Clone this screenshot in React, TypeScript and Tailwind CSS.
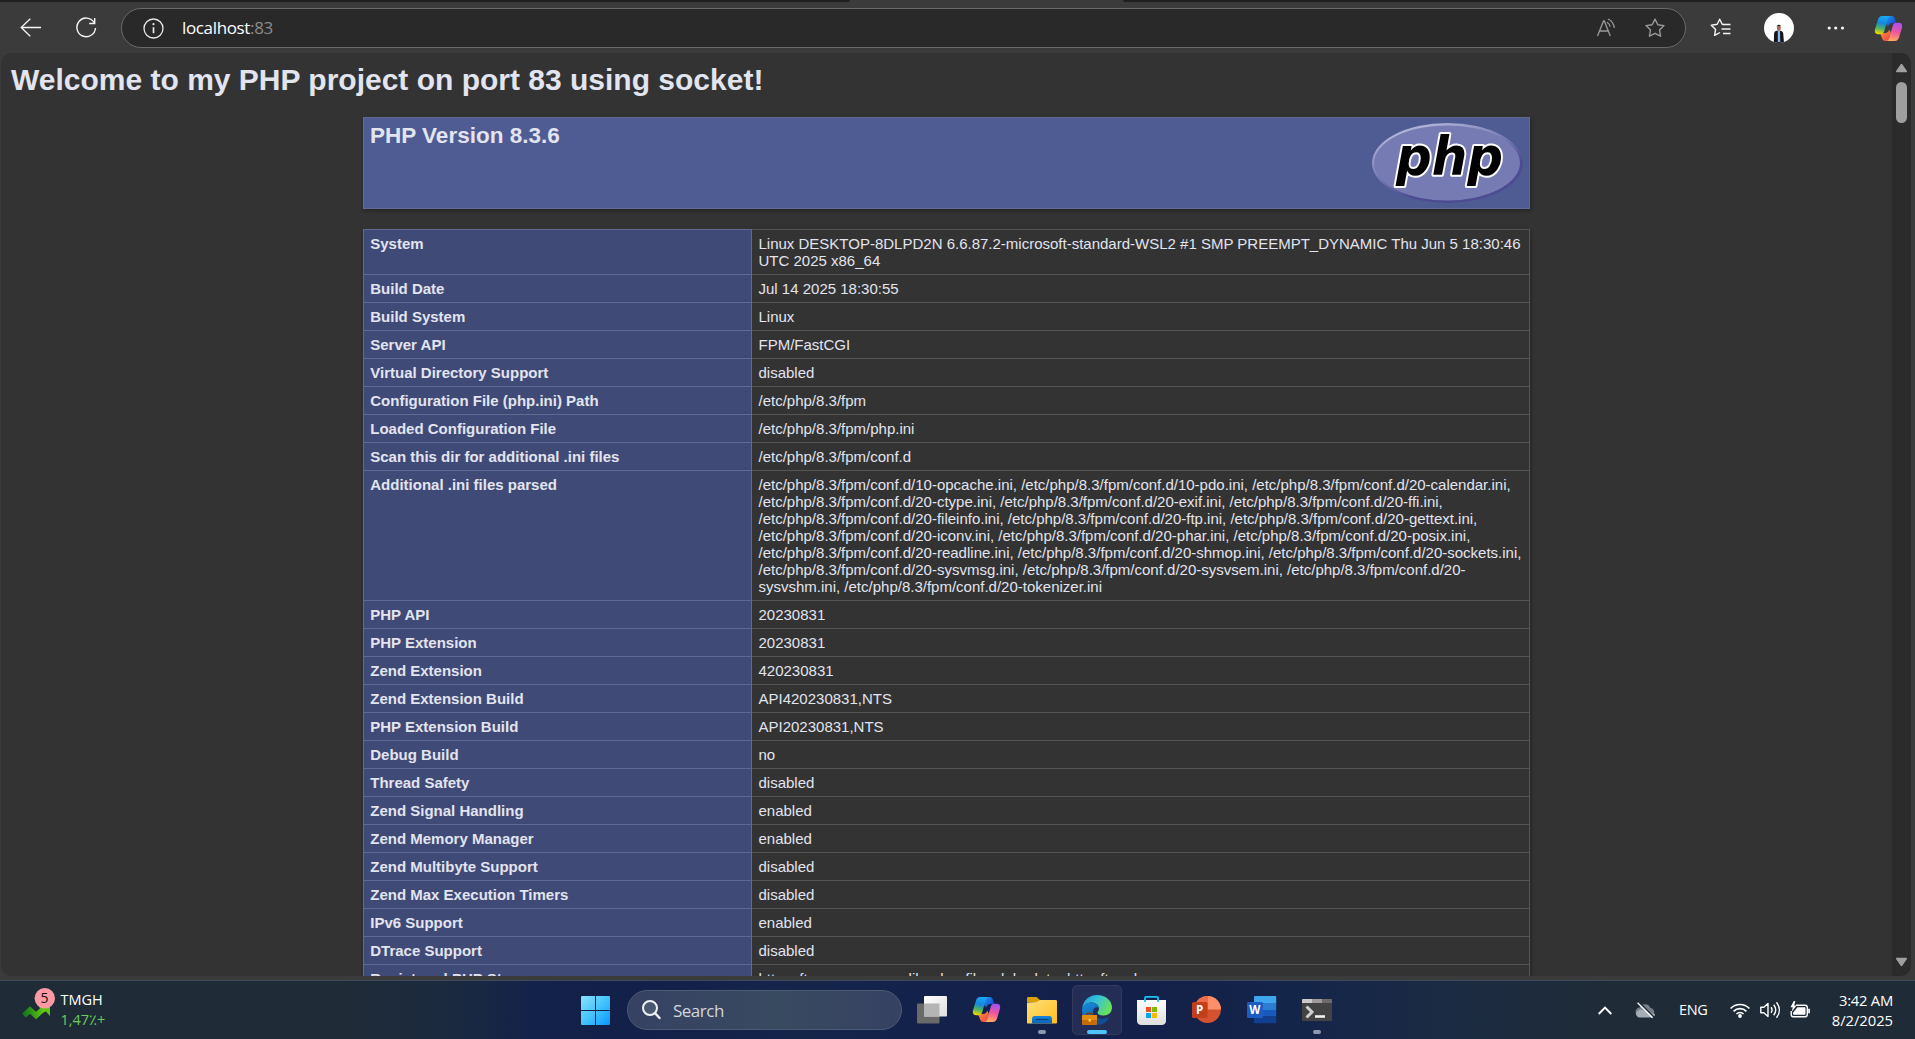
import React from "react";

const rows: { label: string; value: string[] }[] = [
  {
    label: "System",
    value: [
      "Linux DESKTOP-8DLPD2N 6.6.87.2-microsoft-standard-WSL2 #1 SMP PREEMPT_DYNAMIC Thu Jun 5 18:30:46",
      "UTC 2025 x86_64",
    ],
  },
  { label: "Build Date", value: ["Jul 14 2025 18:30:55"] },
  { label: "Build System", value: ["Linux"] },
  { label: "Server API", value: ["FPM/FastCGI"] },
  { label: "Virtual Directory Support", value: ["disabled"] },
  { label: "Configuration File (php.ini) Path", value: ["/etc/php/8.3/fpm"] },
  { label: "Loaded Configuration File", value: ["/etc/php/8.3/fpm/php.ini"] },
  { label: "Scan this dir for additional .ini files", value: ["/etc/php/8.3/fpm/conf.d"] },
  {
    label: "Additional .ini files parsed",
    value: [
      "/etc/php/8.3/fpm/conf.d/10-opcache.ini, /etc/php/8.3/fpm/conf.d/10-pdo.ini, /etc/php/8.3/fpm/conf.d/20-calendar.ini,",
      "/etc/php/8.3/fpm/conf.d/20-ctype.ini, /etc/php/8.3/fpm/conf.d/20-exif.ini, /etc/php/8.3/fpm/conf.d/20-ffi.ini,",
      "/etc/php/8.3/fpm/conf.d/20-fileinfo.ini, /etc/php/8.3/fpm/conf.d/20-ftp.ini, /etc/php/8.3/fpm/conf.d/20-gettext.ini,",
      "/etc/php/8.3/fpm/conf.d/20-iconv.ini, /etc/php/8.3/fpm/conf.d/20-phar.ini, /etc/php/8.3/fpm/conf.d/20-posix.ini,",
      "/etc/php/8.3/fpm/conf.d/20-readline.ini, /etc/php/8.3/fpm/conf.d/20-shmop.ini, /etc/php/8.3/fpm/conf.d/20-sockets.ini,",
      "/etc/php/8.3/fpm/conf.d/20-sysvmsg.ini, /etc/php/8.3/fpm/conf.d/20-sysvsem.ini, /etc/php/8.3/fpm/conf.d/20-",
      "sysvshm.ini, /etc/php/8.3/fpm/conf.d/20-tokenizer.ini",
    ],
  },
  { label: "PHP API", value: ["20230831"] },
  { label: "PHP Extension", value: ["20230831"] },
  { label: "Zend Extension", value: ["420230831"] },
  { label: "Zend Extension Build", value: ["API420230831,NTS"] },
  { label: "PHP Extension Build", value: ["API20230831,NTS"] },
  { label: "Debug Build", value: ["no"] },
  { label: "Thread Safety", value: ["disabled"] },
  { label: "Zend Signal Handling", value: ["enabled"] },
  { label: "Zend Memory Manager", value: ["enabled"] },
  { label: "Zend Multibyte Support", value: ["disabled"] },
  { label: "Zend Max Execution Timers", value: ["disabled"] },
  { label: "IPv6 Support", value: ["enabled"] },
  { label: "DTrace Support", value: ["disabled"] },
  {
    label: "Registered PHP Streams",
    value: ["https, ftps, compress.zlib, php, file, glob, data, http, ftp, phar"],
  },
];

const UI = "font-['Open_Sans','Noto_Sans',sans-serif]";

function CopilotIcon({ id }: { id: string }) {
  return (
    <svg width="29" height="27" viewBox="0 0 29 27">
      <defs>
        <linearGradient id={id + "a"} x1="0.5" y1="0" x2="0.3" y2="1">
          <stop offset="0" stopColor="#1aa7f5" />
          <stop offset="0.4" stopColor="#1488dc" />
          <stop offset="0.68" stopColor="#4fb067" />
          <stop offset="1" stopColor="#f3d800" />
        </linearGradient>
        <linearGradient id={id + "b"} x1="0.6" y1="0" x2="0.4" y2="1">
          <stop offset="0" stopColor="#a64ff5" />
          <stop offset="0.5" stopColor="#f0569b" />
          <stop offset="1" stopColor="#ffae5c" />
        </linearGradient>
        <linearGradient id={id + "c"} x1="0" y1="0" x2="1" y2="1">
          <stop offset="0" stopColor="#1b9cf0" />
          <stop offset="1" stopColor="#1a35c9" />
        </linearGradient>
        <linearGradient id={id + "d"} x1="0" y1="0" x2="1" y2="1">
          <stop offset="0" stopColor="#ff9a2e" />
          <stop offset="1" stopColor="#ee3f4f" />
        </linearGradient>
      </defs>
      <path d="M14 1h3.500c2 0 3 1.200 3.500 3l1 4h-3.500c-2.500 0-3.600 1.500-4.200 3.500L12 9z" fill={`url(#${id}c)`} />
      <path d="M6 18h5c2.500 0 3.500-1.500 4.200-3.500L17 18l-2.800 8H11.500c-2 0-3-1.200-3.500-3z" fill={`url(#${id}d)`} />
      <path d="M8 1h9c-1.800 0-2.700 1.300-3.300 3.300L10.300 16c-.6 2-1.700 3.200-3.800 3.200H4C1.300 19.200.3 17 1.100 14L4 4.500C4.700 2.200 5.900 1 8 1z" fill={`url(#${id}a)`} />
      <path d="M21 26h-9c1.800 0 2.700-1.300 3.300-3.300L18.700 11c.6-2 1.700-3.200 3.800-3.200H25c2.700 0 3.700 2.200 2.900 5.200L25 22.500c-.7 2.300-1.900 3.500-4 3.500z" fill={`url(#${id}b)`} />
    </svg>
  );
}

function StarIcon({ color }: { color: string }) {
  return (
    <svg width="20" height="20" viewBox="0 0 20 20" fill="none" stroke={color} strokeWidth="1.4" strokeLinejoin="round">
      <path d="M10 1.100l2.800 5.600 6.200.9-4.500 4.400 1.100 6.200L10 15.300l-5.600 2.900 1.100-6.200L1 7.600l6.200-.9z" />
    </svg>
  );
}

function BrowserBar() {
  return (
    <div className={`relative flex h-[53px] shrink-0 items-center bg-[#3b3b3b] pt-[3px] ${UI}`}>
      <div className="absolute left-0 top-0 h-[2px] w-[850px] rounded-br-md bg-[#202020]" />
      <div className="absolute right-0 top-0 h-[2px] w-[792px] rounded-bl-md bg-[#202020]" />
      <svg className="ml-[20px]" width="22" height="20" viewBox="0 0 22 20" fill="none" stroke="#f5f5f5" strokeWidth="1.300">
        <path d="M21 9.500H1.200M10.300.8L1.200 9.500l9.100 8.700" />
      </svg>
      <svg className="ml-[33px]" width="22" height="22" viewBox="0 0 22 22" fill="none" stroke="#f5f5f5" strokeWidth="1.400">
        <path d="M19.200 5.600A9.300 9.300 0 1 0 20.500 11" />
        <path d="M19.700 1v5.500h-5.500" />
      </svg>
      <div className="ml-[24px] flex h-[40px] w-[1565px] items-center rounded-full border border-[#696969] bg-[#292929]">
        <svg className="ml-[21px]" width="21" height="21" viewBox="0 0 21 21" fill="none" stroke="#e8e8e8" strokeWidth="1.300">
          <circle cx="10.500" cy="10.500" r="9.500" />
          <path d="M10.500 9.200v6" strokeWidth="1.700" />
          <circle cx="10.500" cy="6.200" r="1.100" fill="#e8e8e8" stroke="none" />
        </svg>
        <div className="ml-[18px] h-[22px] w-[140px] whitespace-nowrap text-[17px] leading-[21px] tracking-[-0.35px] text-white">
          localhost<span className="text-[#8b8b8b]">:83</span>
        </div>
        <svg className="ml-auto" width="21" height="20" viewBox="0 0 21 20" fill="none" stroke="#9a9a9a" strokeWidth="1.300">
          <path d="M1.500 18L7.500 3h.8l6 15M3.500 13h8.800" />
          <path d="M11 4.200c1.700.9 2.700 2.200 3.200 4.500" />
          <path d="M12 1c3.500 1.500 5.800 4.500 6.300 9" />
        </svg>
        <div className="ml-[28px] mr-[20px]">
          <StarIcon color="#9a9a9a" />
        </div>
      </div>
      <svg className="ml-[24px]" width="21" height="20" viewBox="0 0 21 20" fill="none" stroke="#f5f5f5" strokeWidth="1.400" strokeLinejoin="round">
        <path d="M14 6.600l-1.800-.3L9.700 1.200 7.200 6.300l-5.900.9 4.300 4.200-1 5.900 5.400-2.800" />
        <path d="M13 6.500h7.500M11.500 11h9M13 15.500h7.500" strokeWidth="1.600" />
      </svg>
      <svg className="ml-[33px]" width="30" height="30" viewBox="0 0 30 30">
        <defs>
          <clipPath id="avatar"><circle cx="15" cy="15" r="15" /></clipPath>
        </defs>
        <circle cx="15" cy="15" r="15" fill="#fff" />
        <g clipPath="url(#avatar)">
          <path d="M9.800 30l.3-9.500c.1-2 1.500-3 4.400-3s4.500 1 4.700 3l.8 9.500z" fill="#15161d" />
          <path d="M13.800 18h2.200l.300 11h-2.500z" fill="#8fb6ea" />
          <ellipse cx="14.800" cy="15" rx="2" ry="2.700" fill="#a9694a" />
          <path d="M12.700 14c0-3 4.200-3 4.200 0l-.6-.9h-3z" fill="#221a18" />
        </g>
      </svg>
      <svg className="ml-[33px]" width="18" height="4" viewBox="0 0 18 4" fill="#f5f5f5">
        <circle cx="2.200" cy="2" r="1.600" /><circle cx="8.700" cy="2" r="1.600" /><circle cx="15.500" cy="2" r="1.600" />
      </svg>
      <div className="ml-[29px]">
        <CopilotIcon id="tb" />
      </div>
    </div>
  );
}

function PhpLogo() {
  return (
    <svg width="152" height="82" viewBox="0 0 152 82">
      <defs>
        <linearGradient id="rim" x1="0.200" y1="0" x2="0.800" y2="1">
          <stop offset="0.050" stopColor="#b5b8dc" />
          <stop offset="0.450" stopColor="#7479b4" />
          <stop offset="0.700" stopColor="#4d4b92" />
        </linearGradient>
      </defs>
      <ellipse cx="75.500" cy="40" rx="75.500" ry="40" fill="url(#rim)" />
      <ellipse cx="75" cy="40" rx="73" ry="37.500" fill="#777bb3" />
      <text x="24" y="51.500" textLength="107" lengthAdjust="spacingAndGlyphs" fontFamily="DejaVu Sans" fontWeight="700" fontStyle="italic" fontSize="53" fill="#000" stroke="#fff" strokeWidth="4" strokeLinejoin="round" paintOrder="stroke">
        php
      </text>
    </svg>
  );
}

function PhpInfo() {
  return (
    <div className="relative flex min-h-0 flex-1 bg-[#3b3b3b] pb-[4px] pl-px pr-[4px] font-['Liberation_Sans',Arial,sans-serif] text-[#e2e4ef]">
      <main className="h-[923px] min-w-0 flex-1 overflow-hidden rounded-l-[10px] bg-[#333333]">
        <h1 className="ml-[10px] mt-[9px] h-[36px] whitespace-nowrap text-[30px] font-bold leading-[36px]">
          Welcome to my PHP project on port 83 using socket!
        </h1>
        <div className="ml-[362px] mt-[19px] flex h-[92px] w-[1167px] justify-between border border-[#606a95] bg-[#4f5b93] shadow-[1px_2px_4px_rgba(0,0,0,0.3)]">
          <h2 className="ml-[6px] mt-[5px] text-[22.500px] font-bold leading-[26px]">PHP Version 8.3.6</h2>
          <div className="mr-[5px] mt-[5px]"><PhpLogo /></div>
        </div>
        <div className="ml-[362px] mt-[20px] w-[1167px] border-t border-r border-r-[#555555] border-t-[#555555] text-[15px] leading-[17px] shadow-[1px_2px_4px_rgba(0,0,0,0.3)]">
          {rows.map((r, i) => (
            <div key={r.label} className="flex">
              <div className={`w-[389px] shrink-0 border-b border-l border-r border-[#606a95] bg-[#404a77] py-[5px] pl-[6.250px] font-bold ${i === 0 ? "-mt-px border-t" : ""}`}>
                {r.label}
              </div>
              <div className="flex-1 whitespace-nowrap border-b border-[#555555] py-[5px] pl-[6.500px]">
                {r.value.map((line) => (
                  <div key={line}>{line}</div>
                ))}
              </div>
            </div>
          ))}
        </div>
      </main>
      <div className="flex h-[923px] w-[19px] flex-col items-center rounded-r-[10px] bg-[#2b2b2b]">
        <svg className="mt-[10px]" width="13" height="10" viewBox="0 0 13 10">
          <path d="M6.500 1.500l4.800 7H1.700z" fill="#9f9f9f" stroke="#9f9f9f" strokeWidth="1.500" strokeLinejoin="round" />
        </svg>
        <div className="mt-[9px] h-[41px] w-[11px] rounded-full bg-[#9f9f9f]" />
        <svg className="mb-[9px] mt-auto" width="13" height="10" viewBox="0 0 13 10">
          <path d="M6.500 8.500l4.800-7H1.700z" fill="#9f9f9f" stroke="#9f9f9f" strokeWidth="1.500" strokeLinejoin="round" />
        </svg>
      </div>
    </div>
  );
}

function Slot({ children, active, dot }: { children: React.ReactNode; active?: boolean; dot?: boolean }) {
  return (
    <div className="flex h-[50px] w-[55px] justify-center">
      <div className={active ? "flex w-[50px] flex-col items-center rounded-[5px] border border-[#343a5c] bg-[#232d56] pt-[9px]" : "flex w-[50px] flex-col items-center pt-[10px]"}>
        <div className="h-[30px] w-[30px]">{children}</div>
        {active && <div className="mt-[5px] h-[4px] w-[20px] rounded-full bg-[#4cc2ff]" />}
        {dot && <div className="mt-[5px] h-[4px] w-[8px] rounded-full bg-[#8f97ae]" />}
      </div>
    </div>
  );
}

function Taskbar() {
  return (
    <div className={`flex h-[59px] shrink-0 items-start border-t border-[#3e4a5b] bg-[linear-gradient(90deg,#1f2b37_0%,#1f2b37_18%,#1a2940_24%,#13224a_28%,#132049_34%,#15254a_42%,#13214b_50%,#132049_60%,#14254a_68%,#1b2b42_76%,#1f2b37_84%,#1f2b37_100%)] pt-[4px] text-white ${UI}`}>
      <div className="flex w-[568.500px] shrink-0">
        <svg className="ml-[22px] mt-[3px]" width="34" height="34" viewBox="0 0 34 34">
          <defs>
            <linearGradient id="trend" x1="0" y1="0" x2="1" y2="0">
              <stop offset="0" stopColor="#127a1b" />
              <stop offset="1" stopColor="#6bcf12" />
            </linearGradient>
          </defs>
          <path d="M2 27.500l6-5.500 6 5.500 10-9" fill="none" stroke="url(#trend)" strokeWidth="5.500" />
          <path d="M14 14.500h14v13.500l-4-4.500-3 1z" fill="#62c713" />
          <circle cx="22.800" cy="10.200" r="10.200" fill="#ff99a4" />
          <text x="22.600" y="15" textAnchor="middle" fontSize="14" fontFamily="Open Sans" fill="#1b1113">5</text>
        </svg>
        <div className="ml-[4.500px] mt-[5px] whitespace-nowrap text-[14.500px] leading-[20px]">
          <div>TMGH</div>
          <div className="tracking-[-0.500px] text-[#6ccb5f]">1,47٪+</div>
        </div>
      </div>

      <Slot>
        <svg width="30" height="30" viewBox="0 0 30 30">
          <defs>
            <linearGradient id="win" gradientUnits="userSpaceOnUse" x1="0" y1="0" x2="30" y2="30">
              <stop offset="0" stopColor="#8be4ff" />
              <stop offset="0.500" stopColor="#45c4fb" />
              <stop offset="1" stopColor="#0795fb" />
            </linearGradient>
          </defs>
          <path d="M0 2a1 1 0 011-1h13v14H0zM15 1h13a1 1 0 011 1v13H15zM0 16h14v14H1a1 1 0 01-1-1zM15 16h14v13a1 1 0 01-1 1H15z" fill="url(#win)" />
          <path d="M14.500 0v30M0 15.500h30" stroke="#13204a" strokeWidth="1" />
        </svg>
      </Slot>

      <div className="ml-[3.500px] mr-[2.500px] mt-[5px] flex h-[40px] w-[275px] items-center rounded-full border border-[#4d5a76] bg-[linear-gradient(90deg,#364163,#384a60_55%,#364163)]">
        <svg className="ml-[14px]" width="19" height="20" viewBox="0 0 19 20" fill="none" stroke="#f0f1f4" strokeWidth="2">
          <circle cx="8" cy="8" r="7" fill="#4b5872" />
          <path d="M13 13l4.500 5" strokeWidth="2.400" strokeLinecap="round" />
        </svg>
        <span className="ml-[12px] mt-[2px] text-[17px] leading-[20px] tracking-[-0.500px] text-[#d3d6dd]">Search</span>
      </div>

      <Slot>
        <svg width="30" height="30" viewBox="0 0 30 30">
          <defs>
            <linearGradient id="tv" x1="0" y1="0" x2="1" y2="1">
              <stop offset="0" stopColor="#fff" /><stop offset="1" stopColor="#dedede" />
            </linearGradient>
          </defs>
          <rect x="0" y="8.500" width="22.500" height="20" rx="1" fill="#6a6a6a" />
          <rect x="7" y="1" width="23" height="20.500" rx="1" fill="url(#tv)" />
          <rect x="7" y="8.500" width="15.500" height="13" fill="#b4b4b4" />
        </svg>
      </Slot>
      <Slot><div className="pt-[1px]"><CopilotIcon id="tk" /></div></Slot>
      <Slot dot>
        <svg width="30" height="30" viewBox="0 0 30 30">
          <defs>
            <linearGradient id="fold" x1="0" y1="0" x2="1" y2="1">
              <stop offset="0" stopColor="#ffe07a" /><stop offset="1" stopColor="#ffbd20" />
            </linearGradient>
            <linearGradient id="foldb" x1="0" y1="0" x2="0" y2="1">
              <stop offset="0" stopColor="#1585d8" /><stop offset="1" stopColor="#0a63b8" />
            </linearGradient>
          </defs>
          <path d="M0 3.500c0-1 .6-1.500 1.500-1.500h8l3.500 3h15c1.200 0 2 .8 2 2H0z" fill="#dda108" />
          <path d="M0 7.500L10 7l3-2h15.500c.9 0 1.500.6 1.500 1.500v21c0 .7-.4 1-1 1H1c-.6 0-1-.4-1-1z" fill="url(#fold)" />
          <path d="M5 28.500V24c0-2 1-3 3-3h14c2 0 3 1 3 3v4.500z" fill="url(#foldb)" />
          <path d="M8.500 24.500h13" stroke="#06427f" strokeWidth="1.200" />
        </svg>
      </Slot>
      <Slot active>
        <svg width="30" height="30" viewBox="0 0 30 30">
          <defs>
            <linearGradient id="edge" x1="0" y1="0" x2="1" y2="0.500">
              <stop offset="0" stopColor="#1b94dd" /><stop offset="0.500" stopColor="#36c3d8" /><stop offset="1" stopColor="#68e05c" />
            </linearGradient>
            <linearGradient id="edge2" x1="0" y1="0" x2="0.600" y2="1">
              <stop offset="0" stopColor="#1a8fdc" /><stop offset="1" stopColor="#0c4f9f" />
            </linearGradient>
          </defs>
          <path d="M0 14C1 5.500 7 0 15 0c8.500 0 15 5.500 15 12.500 0 5-3.500 8-8.500 8-3.500 0-6-1.300-6-3 0-1.200 1.500-1.700 1.500-4C17 10 13.500 7.500 9.500 7.500 5 7.500 1.500 10 0 14z" fill="url(#edge)" />
          <path d="M0 15C.5 10.500 4.500 7.500 9.500 7.500c4 0 7.500 2.500 7.500 6-1.500-2.500-6-1.500-6 3.500 0 5 5 9.500 15.500 6C23.500 28 19 30 14.500 30 6 30 0 23.500 0 15z" fill="url(#edge2)" />
          <path d="M11 18c1.500 5 8 7.500 16 4-.5 3-5 8-12.500 8C10 28 9 22 11 18z" fill="#124c92" />
          <path d="M5 20v-1.500h5V20" fill="none" stroke="#7d3e05" strokeWidth="1.400" />
          <rect x="0" y="20" width="15" height="10" rx="1" fill="#c36d08" />
          <path d="M0 21c0-.6.4-1 1-1h13c.6 0 1 .4 1 1v4H0z" fill="#e28d10" />
          <rect x="6.700" y="24" width="2" height="2.500" fill="#ffe05a" />
        </svg>
      </Slot>
      <Slot>
        <svg width="30" height="30" viewBox="0 0 30 30">
          <defs>
            <linearGradient id="store" x1="0" y1="0" x2="0" y2="1">
              <stop offset="0" stopColor="#fff" /><stop offset="1" stopColor="#dedede" />
            </linearGradient>
          </defs>
          <path d="M0 5h29v20.500c0 2.800-1.500 4.500-4.500 4.500H4.500C1.500 30 0 28.300 0 25.500z" fill="url(#store)" />
          <path d="M8 7V2.800c0-.6.300-1 1-1h11c.7 0 1 .4 1 1V7" fill="none" stroke="#1fc0f2" strokeWidth="1.800" />
          <path d="M9 12h5v5H9z" fill="#f25022" /><path d="M15 12h5v5h-5z" fill="#7fba00" />
          <path d="M9 18h5v5H9z" fill="#00a4ef" /><path d="M15 18h5v5h-5z" fill="#ffb900" />
        </svg>
      </Slot>
      <Slot>
        <svg width="30" height="30" viewBox="0 0 30 30">
          <circle cx="15.500" cy="14.500" r="13.500" fill="#d35230" />
          <path d="M15.500 1a13.500 13.500 0 0113.500 13.500H15.500z" fill="#ff8f6b" />
          <path d="M15.500 1v13.500H2A13.500 13.500 0 0115.500 1z" fill="#ed6c47" />
          <rect x="0" y="7" width="15.500" height="16" rx="1.500" fill="#c43e1c" />
          <text x="7.500" y="19" textAnchor="middle" fontFamily="Open Sans" fontWeight="700" fontSize="11.500" fill="#fff">P</text>
        </svg>
      </Slot>
      <Slot>
        <svg width="30" height="30" viewBox="0 0 30 30">
          <path d="M8 1h20.500a.7.700 0 01.700.700V8H7V2a1 1 0 011-1z" fill="#41a5ee" />
          <path d="M7 8h22.200v7H7z" fill="#2b7cd3" />
          <path d="M7 15h22.200v6.500H7z" fill="#185abd" />
          <path d="M7 21.500h22.200v6a.7.700 0 01-.7.700H8a1 1 0 01-1-1z" fill="#103f91" />
          <rect x="0" y="7" width="16" height="16" rx="1.500" fill="#1d5cc0" />
          <text x="7.800" y="19" textAnchor="middle" fontFamily="Open Sans" fontWeight="700" fontSize="11.500" fill="#fff">W</text>
        </svg>
      </Slot>
      <Slot dot>
        <svg width="30" height="30" viewBox="0 0 30 30">
          <rect x="0" y="4" width="30" height="22" rx="1.200" fill="#434343" />
          <path d="M0 8V5.200C0 4.500.500 4 1.200 4H10v4z" fill="#cfc9c9" />
          <path d="M10 4h10v4H10z" fill="#a09a9a" />
          <path d="M20 4h8.800c.7 0 1.200.5 1.200 1.200V8H20z" fill="#6e6a6a" />
          <path d="M4.500 11.500l5.500 5.500-5.500 5.500" fill="none" stroke="#cfcfcf" strokeWidth="3" />
          <path d="M13 21.500h10" stroke="#f0f0f0" strokeWidth="2.600" />
        </svg>
      </Slot>

      <div className="ml-auto flex h-[50px] items-center pr-[22px]">
        <svg width="14" height="9" viewBox="0 0 14 9" fill="none" stroke="#fff" strokeWidth="1.900">
          <path d="M.7 8L7 1.700 13.300 8" />
        </svg>
        <svg className="ml-[23px]" width="20" height="17" viewBox="0 0 20 17">
          <path d="M5 15a4.800 4.800 0 01-.5-9.500A6 6 0 0115.500 6 4.600 4.600 0 0115.500 15z" fill="#75808b" />
          <path d="M1 11c2-4 7-5 10-1l9 2c0 2-1.500 3.500-4.500 3.500H5C3 15.500 1 14 1 11z" fill="#a6adb4" />
          <path d="M3.800 0l15 15" stroke="#1f2b37" strokeWidth="1.600" />
          <path d="M2.600.8l15 15" stroke="#fff" strokeWidth="1.300" />
        </svg>
        <div className="ml-[24px] w-[30px] whitespace-nowrap text-[14.500px] tracking-[-0.400px]">ENG</div>
        <svg className="ml-[21px]" width="20" height="16" viewBox="0 0 20 16" fill="none" stroke="#fff" strokeWidth="1.700">
          <path d="M.6 6.500a13 13 0 0118.800 0M3.600 9.300a9 9 0 0112.800 0M6.500 12a5 5 0 017 0" />
          <circle cx="10" cy="14" r="1.900" fill="#fff" stroke="none" />
        </svg>
        <svg className="ml-[10px]" width="21" height="18" viewBox="0 0 21 18" fill="none" stroke="#fff" strokeWidth="1.400" strokeLinejoin="round">
          <path d="M.8 6.200h3L8 2.500v13l-4.200-3.700h-3z" />
          <path d="M11 6.200c1.300 1.700 1.300 3.900 0 5.600M13.700 3.800c2.500 3.200 2.500 7.200 0 10.400M16.500 1.300c3.700 4.700 3.700 10.700 0 15.400" />
        </svg>
        <svg className="ml-[9px]" width="21" height="18" viewBox="0 0 21 18">
          <path d="M6 4.200h9c1.400 0 2.300.9 2.300 2.300v7c0 1.400-.9 2.300-2.300 2.300H3.500c-1.400 0-2.300-.9-2.300-2.300V10" fill="none" stroke="#fff" strokeWidth="1.400" />
          <path d="M7.500 6.200h7c.6 0 1 .4 1 1v5.600c0 .6-.4 1-1 1H4c-.6 0-1-.4-1-1v-1z" fill="#fff" />
          <path d="M18.200 7.800h1.700v4.500h-1.700z" fill="#fff" />
          <path d="M3.800 0L.5 6.200h2.300L1.600 11l5-6.500H4.200L5.300 0z" fill="#fff" />
        </svg>
        <div className="ml-[17px] mt-[-1px] w-[65px] whitespace-nowrap text-right text-[14.800px] leading-[20px]">
          <div className="tracking-[-0.250px]">3:42 AM</div>
          <div className="tracking-[-0.050px]">8/2/2025</div>
        </div>
      </div>
    </div>
  );
}

export default function App() {
  return (
    <div className="flex h-[1039px] w-[1915px] flex-col overflow-hidden bg-[#3b3b3b]">
      <BrowserBar />
      <PhpInfo />
      <Taskbar />
    </div>
  );
}
